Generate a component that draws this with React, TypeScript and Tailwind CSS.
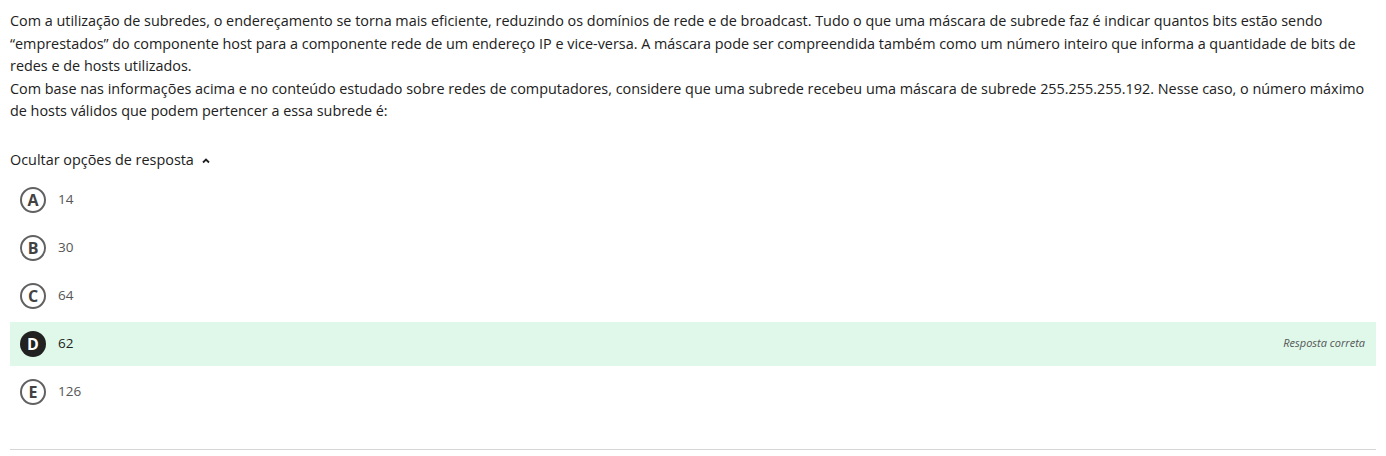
import React from "react";

const options = [
  { l: "A", v: "14" },
  { l: "B", v: "30" },
  { l: "C", v: "64" },
  { l: "D", v: "62", correct: true },
  { l: "E", v: "126" },
];

export default function App() {
  return (
    <div
      className="w-[1386px] h-[456px] bg-white px-[10px] pt-[10px] text-[#212121]"
      style={{ fontFamily: '"Open Sans", "Liberation Sans", sans-serif' }}
    >
      <div className="pr-[2px] text-[14.4px] leading-[22.5px]">
        <p>
          Com a utilização de subredes, o endereçamento se torna mais eficiente, reduzindo os domínios de rede e de broadcast. Tudo o que uma máscara de subrede faz é indicar quantos bits estão sendo “emprestados” do componente host para a componente rede de um endereço IP e vice-versa. A máscara pode ser compreendida também como um número inteiro que informa a quantidade de bits de redes e de hosts utilizados.
        </p>
        <p>
          Com base nas informações acima e no conteúdo estudado sobre redes de computadores, considere que uma subrede recebeu uma máscara de subrede 255.255.255.192. Nesse caso, o número máximo de hosts válidos que podem pertencer a essa subrede é:
        </p>
      </div>
      <div className="mt-[26px] flex items-center h-[22px] text-[14.4px] text-[#212121]">
        <span>Ocultar opções de resposta</span>
        <svg width="10" height="10" viewBox="0 0 10 10" className="ml-[7px] mt-[2px]">
          <path d="M2 6.5 L5 3.5 L8 6.5" fill="none" stroke="#212121" strokeWidth="1.8" />
        </svg>
      </div>
      <div className="mt-[7px] flex flex-col gap-[4px]">
        {options.map((o) => (
          <div
            key={o.l}
            className={
              "h-[44px] flex items-center pl-[10px] pr-[11px] " +
              (o.correct ? "bg-[#dff8ea]" : "")
            }
          >
            <div
              className={
                "w-[26px] h-[26px] rounded-full flex items-center justify-center text-[16px] font-bold leading-none " +
                (o.correct
                  ? "bg-[#212121] text-white"
                  : "border-2 border-[#616161] text-[#424242]")
              }
            >
              {o.l}
            </div>
            <span
              className={
                "ml-[12px] text-[13.5px] " + (o.correct ? "text-[#212121]" : "text-[#555]")
              }
            >
              {o.v}
            </span>
            {o.correct && (
              <span className="ml-auto text-[11px] italic text-[#555]">Resposta correta</span>
            )}
          </div>
        ))}
      </div>
      <div className="mt-[35px] h-px bg-[#d6d6d6]" />
    </div>
  );
}
